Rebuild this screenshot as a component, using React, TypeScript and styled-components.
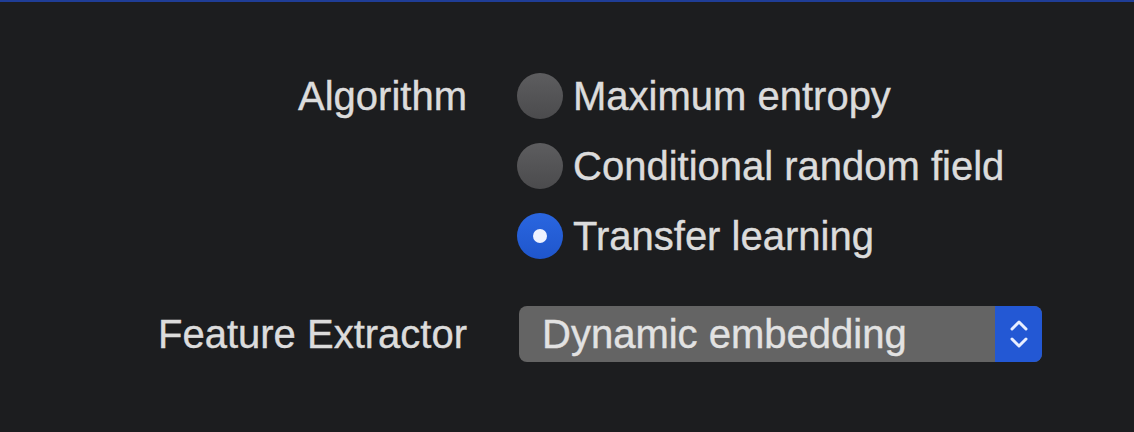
import React from "react";
import styled, { createGlobalStyle } from "styled-components";

const GlobalStyle = createGlobalStyle`
  html, body {
    margin: 0;
    padding: 0;
    background: #1c1d1f;
  }
  body {
    font-family: "Liberation Sans", Arial, sans-serif;
  }
`;

const Window = styled("div")`
  width: 1134px;
  height: 432px;
  box-sizing: border-box;
  border-top: 2px solid #1f3d96;
  background-color: #1c1d1f;
  padding-top: 59px;
`;

const Form = styled("div")`
  display: grid;
  grid-template-columns: 467px auto;
  column-gap: 50px;
  row-gap: 35px;
  align-items: start;
`;

const Label = styled("div")<{ $center?: boolean }>`
  justify-self: end;
  align-self: ${p => (p.$center ? "center" : "start")};
  font-size: 40px;
  line-height: ${p => (p.$center ? "56px" : "70px")};
  color: #dcdcdc;
  -webkit-text-stroke: 0.4px #dcdcdc;
  white-space: nowrap;
`;

const RadioGroup = styled("div")`
  display: flex;
  flex-direction: column;
`;

const RadioRow = styled("label")`
  display: flex;
  align-items: center;
  gap: 10px;
  height: 70px;
  font-size: 40px;
  color: #dcdcdc;
  -webkit-text-stroke: 0.4px #dcdcdc;
  white-space: nowrap;
`;

const RadioDot = styled("span")<{ $checked?: boolean }>`
  width: 46px;
  height: 46px;
  border-radius: 50%;
  flex-shrink: 0;
  display: flex;
  align-items: center;
  justify-content: center;
  background: ${p =>
    p.$checked
      ? "linear-gradient(#2a66e0, #1f56cc)"
      : "linear-gradient(#5d5d5f, #4b4b4d)"};
  &::after {
    content: "";
    display: ${p => (p.$checked ? "block" : "none")};
    width: 14px;
    height: 14px;
    border-radius: 50%;
    background: #eef2ff;
  }
`;

const Select = styled("div")`
  display: flex;
  align-items: stretch;
  width: 523px;
  height: 56px;
  margin-left: 2px;
  border-radius: 8px;
  overflow: hidden;
  background: #646464;
`;

const SelectValue = styled("div")`
  flex: 1;
  display: flex;
  align-items: center;
  padding-left: 23px;
  font-size: 40px;
  color: #e2e2e2;
  -webkit-text-stroke: 0.4px #e2e2e2;
  white-space: nowrap;
`;

const Stepper = styled("div")`
  width: 47px;
  display: flex;
  align-items: center;
  justify-content: center;
  background: #2358d4;
`;

const options = ["Maximum entropy", "Conditional random field", "Transfer learning"];

const App: React.FC = () => {
  const [selected, setSelected] = React.useState(2);

  return (
    <React.Fragment>
      <GlobalStyle />
      <Window>
        <Form>
          <Label>Algorithm</Label>
          <RadioGroup>
            {options.map((opt, i) => (
              <RadioRow key={opt} onClick={() => setSelected(i)}>
                <RadioDot $checked={selected === i} />
                {opt}
              </RadioRow>
            ))}
          </RadioGroup>
          <Label $center>Feature Extractor</Label>
          <Select>
            <SelectValue>Dynamic embedding</SelectValue>
            <Stepper>
              <svg width="24" height="38" viewBox="0 0 24 38" fill="none">
                <path d="M5 14 L12 7 L19 14" stroke="#e8eeff" strokeWidth="3" strokeLinecap="round" strokeLinejoin="round" />
                <path d="M5 24 L12 31 L19 24" stroke="#e8eeff" strokeWidth="3" strokeLinecap="round" strokeLinejoin="round" />
              </svg>
            </Stepper>
          </Select>
        </Form>
      </Window>
    </React.Fragment>
  );
};

export default App;
